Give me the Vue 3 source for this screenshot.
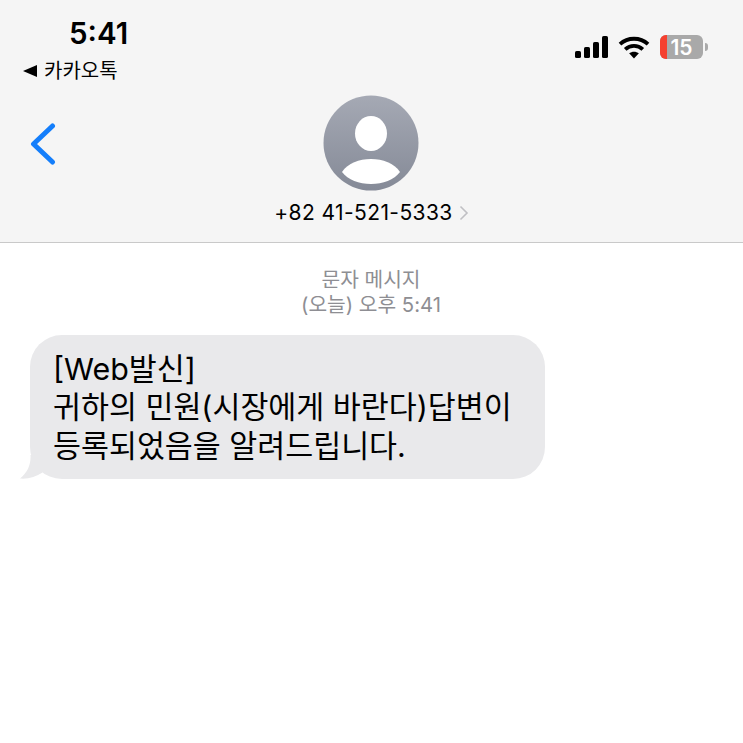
<template>
  <div class="screen">
    <header class="header">
      <div class="status">
        <div class="status-left">
          <div class="clock">5:41</div>
          <div class="return-app"><span class="return-arrow"></span>카카오톡</div>
        </div>
        <div class="status-icons">
          <svg class="signal" width="33" height="22" viewBox="0 0 33 22" fill="#000">
            <rect x="0" y="15" width="6" height="7" rx="1.6" />
            <rect x="9" y="11" width="6" height="11" rx="1.6" />
            <rect x="18" y="6" width="6" height="16" rx="1.6" />
            <rect x="27" y="0" width="6" height="22" rx="1.6" />
          </svg>
          <svg class="wifi" width="32" height="23" viewBox="0 0 32 23" fill="none" stroke="#000" stroke-width="3.8">
            <path d="M2 8.2C9.8 .9 22.2 .9 30 8.2" />
            <path d="M7.2 13.4C12.2 8.8 19.8 8.8 24.8 13.4" />
            <path d="M16 22.5l-4.9-5.2c2.8-2.2 7-2.2 9.8 0z" fill="#000" stroke="none" />
          </svg>
          <div class="battery">
            <div class="battery-body">
              <span class="battery-level"></span>
              <span class="battery-num">15</span>
            </div>
            <span class="battery-cap"></span>
          </div>
        </div>
      </div>

      <div class="contact">
        <svg class="back" width="26" height="44" viewBox="0 0 26 44" fill="none" stroke="#147efb" stroke-width="5" stroke-linecap="round" stroke-linejoin="round">
          <path d="M22.5 4L3.5 22l19 18" />
        </svg>
        <svg class="avatar" width="96" height="96" viewBox="0 0 96 96">
          <defs>
            <linearGradient id="avatarFill" x1="0" y1="0" x2="0" y2="1">
              <stop offset="0" stop-color="#a5a9b4" />
              <stop offset="1" stop-color="#858a97" />
            </linearGradient>
          </defs>
          <circle cx="48" cy="48" r="47.5" fill="url(#avatarFill)" />
          <ellipse cx="48" cy="38.5" rx="16" ry="17.5" fill="#fff" />
          <path d="M19 77C25 68 36 64 48 64S71 68 77 77C71 85 60 89 48 89S25 85 19 77z" fill="#fff" />
        </svg>
        <div class="number">
          +82 41-521-5333
          <svg width="10" height="16" viewBox="0 0 10 16" fill="none" stroke="#c0c0c4" stroke-width="1.6">
            <path d="M1.5 1.5L8 8l-6.5 6.5" />
          </svg>
        </div>
      </div>
    </header>

    <main class="thread">
      <div class="meta">
        <div>문자 메시지</div>
        <div>(오늘) 오후 5:41</div>
      </div>
      <div class="bubble">
        [Web발신]<br />
        귀하의 민원(시장에게 바란다)답변이<br />
        등록되었음을 알려드립니다.
        <svg class="tail" width="30" height="24" viewBox="0 0 30 24" fill="#e9e9eb">
          <path d="M10.500 0C11 9 8 17 0 23.500C8 24.200 16 22 22.500 17.500L30 0z" />
        </svg>
      </div>
    </main>
  </div>
</template>

<script setup>
</script>

<style>
html,
body {
  background: #fff;
}
</style>

<style scoped>
.screen {
  width: 743px;
  height: 743px;
  overflow: hidden;
  background: #fff;
  color: #000;
  font-family: Inter, "Noto Sans CJK KR", sans-serif;
}

.header {
  height: 243px;
  box-sizing: border-box;
  background: #f5f5f5;
  border-bottom: 1px solid #c9c9c9;
}

/* Status bar */
.status {
  height: 95px;
  display: flex;
  justify-content: space-between;
  align-items: flex-start;
  padding: 0 35px 0 23px;
}

.clock {
  margin: 16px 0 0 46px;
  font-size: 29.500px;
  line-height: 35px;
  font-weight: 600;
}

.return-app {
  margin-top: 3px;
  display: flex;
  align-items: center;
  gap: 7px;
  font-size: 20px;
  line-height: 34px;
}

.return-arrow {
  width: 0;
  height: 0;
  border-top: 6.5px solid transparent;
  border-bottom: 6.5px solid transparent;
  border-right: 14px solid #000;
}

.status-icons {
  margin-top: 35px;
  display: flex;
  align-items: center;
  gap: 10px;
}

.battery {
  display: flex;
  align-items: center;
  gap: 2px;
}

.battery-body {
  position: relative;
  width: 43px;
  height: 24px;
  border-radius: 6px;
  overflow: hidden;
  background: #a9a9a9;
  display: flex;
  align-items: center;
  justify-content: center;
}

.battery-level {
  position: absolute;
  left: 0;
  top: 0;
  bottom: 0;
  width: 7px;
  background: #f5402f;
}

.battery-num {
  color: #fff;
  font-size: 21px;
  font-weight: 600;
}

.battery-cap {
  width: 3px;
  height: 8px;
  border-radius: 0 3px 3px 0;
  background: #a9a9a9;
}

/* Avatar + number */
.contact {
  position: relative;
  display: flex;
  flex-direction: column;
  align-items: center;
}

.back {
  position: absolute;
  left: 30px;
  top: 27px;
}

.avatar {
  margin-left: -2px;
}

.number {
  margin-top: 7px;
  display: flex;
  align-items: center;
  gap: 6px;
  font-size: 21px;
  line-height: 30px;
  letter-spacing: 0.4px;
}

/* Messages */
.thread {
  padding: 24px 0 0 30px;
}

.meta {
  width: 682px;
  text-align: center;
  color: #8e8e93;
  font-size: 20.300px;
  line-height: 25px;
}

.bubble {
  position: relative;
  width: 515px;
  height: 144px;
  box-sizing: border-box;
  margin-top: 18px;
  padding: 15px 0 0 23px;
  border-radius: 32px;
  background: #e9e9eb;
  font-size: 30.400px;
  line-height: 38.300px;
}

.tail {
  position: absolute;
  left: -10px;
  bottom: 0;
}
</style>
